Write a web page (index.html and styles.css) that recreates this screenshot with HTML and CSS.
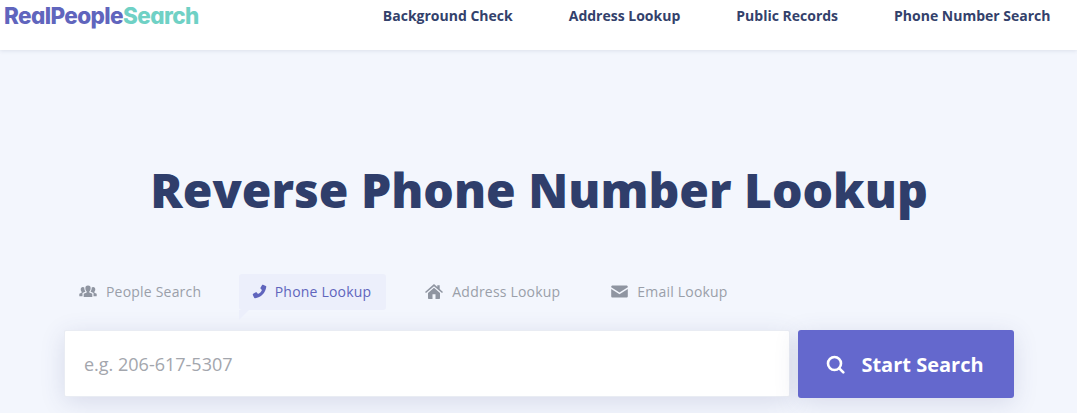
FILE: index.html
```html
<!DOCTYPE html>
<html>
<head>
<meta charset="UTF-8">
<title>Reverse Phone Number Lookup</title>
<link rel="stylesheet" href="styles.css">
</head>
<body>
<header class="topbar">
    <a class="logo" href="#">RealPeople<span class="logo-accent">Search</span></a>
    <nav class="topnav">
        <a href="#">Background Check</a>
        <a href="#">Address Lookup</a>
        <a href="#">Public Records</a>
        <a href="#">Phone Number Search</a>
    </nav>
</header>

<main class="hero">
    <h1>Reverse Phone Number Lookup</h1>

    <div class="tabs">
        <a class="tab" href="#">
            <svg class="tab-icon" width="18" height="14" viewBox="0 0 18 14"><path d="M9 1.5a2.6 2.6 0 0 1 2.6 2.9c0 1.3-.6 2.4-1.3 3v1l3 1.3v3.3H4.700v-3.300l3-1.300v-1C7 6.800 6.400 5.700 6.400 4.400A2.600 2.600 0 0 1 9 1.500zM3.800 3a2 2 0 0 1 1.500.6c-.1 1.300.3 2.700 1 3.700v.5L3.500 9v3.300H.3V9.700l2.300-1v-.9C2 7.300 1.700 6.400 1.700 5.300 1.700 4 2.500 3 3.800 3zm10.400 0c1.300 0 2.100 1 2.100 2.300 0 1.100-.3 2-.9 2.500v.9l2.300 1v2.600h-3.200V9l-2.800-1.200v-.5c.7-1 1.100-2.400 1-3.700a2 2 0 0 1 1.500-.6z"/></svg>
            People Search
        </a>
        <a class="tab tab-active" href="#">
            <svg class="tab-icon" width="15" height="15" viewBox="0 0 14 14"><path d="M10.300.8l2.600 1.100c.4.200.5.500.4 1C12.700 8.300 8.300 12.800 2.900 13.200c-.5.100-.8-.1-1-.5L.8 10.200c-.2-.4 0-.8.300-1l2.400-1.400c.3-.2.700-.1 1 .2l1.100 1.300c1.700-.8 3-2.100 3.700-3.800L8.100 4.400c-.3-.3-.4-.7-.2-1L9.300 1.100c.2-.3.600-.5 1-.3z"/></svg>
            Phone Lookup
        </a>
        <a class="tab" href="#">
            <svg class="tab-icon" width="18" height="15" viewBox="0 0 18 15"><path d="M9 0l3.300 2.900V1.200h2.400V5L18 7.900l-1 1.200L9 2.200 1 9.100 0 7.900zM9 3.700l6 5.200v5.300c0 .4-.3.700-.7.700h-3.800V10.300h-3v4.600H3.700c-.4 0-.7-.3-.7-.7V8.900z"/></svg>
            Address Lookup
        </a>
        <a class="tab tab-last" href="#">
            <svg class="tab-icon" width="17" height="13" viewBox="0 0 17 13"><path d="M1.500.5h14c.7 0 1.300.6 1.300 1.300v.5L8.500 7.500.2 2.300v-.5C.2 1.100.8.500 1.500.5zM.2 4l8.300 5.200L16.800 4v7.200c0 .7-.6 1.300-1.300 1.300h-14c-.7 0-1.300-.6-1.300-1.300z"/></svg>
            Email Lookup
        </a>
    </div>

    <form class="search">
        <input class="search-input" type="text" placeholder="e.g. 206-617-5307">
        <button class="search-btn" type="button">
            <svg width="19" height="19" viewBox="0 0 19 19" fill="none" stroke="#fff" stroke-width="2.600"><circle cx="8.500" cy="8.500" r="6.500"/><path d="M13.300 13.300l4 4" stroke-linecap="round"/></svg>
            Start Search
        </button>
    </form>
</main>
</body>
</html>
```

FILE: styles.css
```css
html, body {
    margin: 0;
    padding: 0;
}

body {
    height: 413px;
    overflow: hidden;
    background: #f3f6fd;
    font-family: "Open Sans", sans-serif;
    color: #2f3e6b;
}

a {
    text-decoration: none;
}

.topbar {
    height: 50px;
    display: flex;
    justify-content: space-between;
    padding: 0 26.500px 0 4px;
    background: #fff;
    box-shadow: 0 1px 4px rgba(60, 70, 110, .12);
}

.logo {
    font-family: "Inter", sans-serif;
    font-feature-settings: "cv11";
    font-weight: 800;
    font-size: 22.500px;
    letter-spacing: -.6px;
    line-height: 32px;
    color: #6065bd;
}

.logo-accent {
    color: #6fd1c5;
}

.topnav {
    display: flex;
    gap: 56px;
}

.topnav a {
    font-size: 14px;
    font-weight: 700;
    line-height: 32px;
    color: #33416b;
}

.hero {
    padding: 0 63px 0 64px;
}

h1 {
    margin: 107px 0 0;
    font-size: 48px;
    line-height: 66px;
    font-weight: 800;
    text-align: center;
    color: #2f3e6b;
}

.tabs {
    display: flex;
    gap: 24px;
    margin-top: 51px;
    padding-left: 1px;
}

.tab {
    position: relative;
    display: flex;
    align-items: center;
    gap: 9px;
    height: 36px;
    padding: 0 14px 2px;
    box-sizing: border-box;
    border-radius: 3px;
    font-size: 14px;
    letter-spacing: .2px;
    color: #9a9fa9;
}

.tab-icon {
    fill: #8f95a1;
}

.tab-active {
    gap: 7.500px;
    margin-right: 1px;
    padding: 0 15px 2px 13px;
    background: #eceffb;
    color: #6065bd;
}

.tab-active .tab-icon {
    fill: #6065bd;
}

.tab-active::after {
    content: "";
    position: absolute;
    left: 0;
    top: 36px;
    border-top: 10px solid #eceffb;
    border-right: 10px solid transparent;
}

.tab-last {
    margin-left: -1px;
}

.search {
    display: flex;
    gap: 8px;
    margin-top: 20px;
}

.search-input {
    flex: 1;
    height: 67px;
    box-sizing: border-box;
    padding: 0 19px;
    background: #fff;
    border: 1px solid #e9ecf3;
    border-radius: 2px;
    outline: none;
    font-family: inherit;
    font-size: 18px;
    box-shadow: 0 5px 25px rgba(60, 70, 130, .15);
}

.search-input::placeholder {
    color: #a3a6ad;
}

.search-btn {
    width: 216px;
    height: 68px;
    display: flex;
    align-items: center;
    justify-content: center;
    gap: 16px;
    padding: 0 2px 0 0;
    border: 0;
    border-radius: 3px;
    background: #6468cd;
    color: #fff;
    font-family: inherit;
    font-size: 20px;
    font-weight: 700;
    box-shadow: 0 5px 25px rgba(60, 70, 130, .15);
}
```
